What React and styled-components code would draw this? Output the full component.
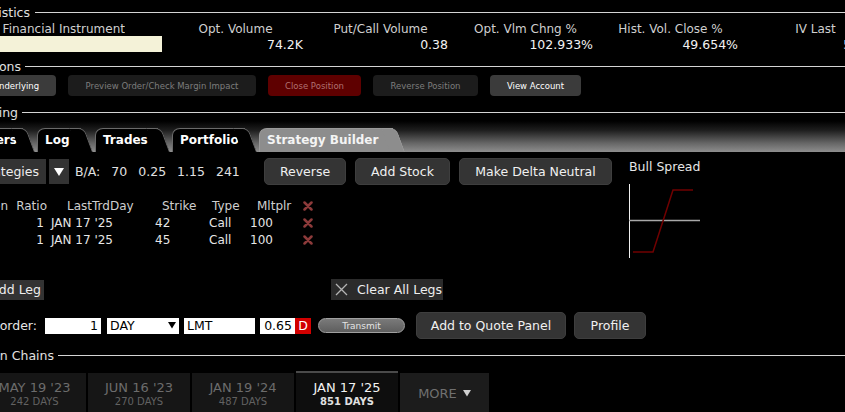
import styled, { createGlobalStyle } from "styled-components";

const GlobalStyle = createGlobalStyle`
    html, body {
        margin: 0;
        padding: 0;
        background: #000;
    }
    body {
        font-family: "DejaVu Sans", Verdana, sans-serif;
    }
`;

const Page = styled.div`
    width: 845px;
    height: 412px;
    overflow: hidden;
    background: #000;
    color: #dcdcdc;
    font-size: 12px;
    display: flex;
    flex-direction: column;
    padding-top: 3px;
    box-sizing: border-box;
`;

// keeps the right end of something at a fixed x, cutting its left side off like the window does
const Clip = styled.div`
    width: ${p => p.$w}px;
    flex: none;
    overflow: hidden;
    display: flex;
    justify-content: flex-end;
    align-items: ${p => p.$bottom ? "flex-end" : "center"};
    height: ${p => p.$h ? p.$h + "px" : "auto"};
    color: ${p => p.$color || "inherit"};
    white-space: nowrap;
`;

const SectionHead = styled.div`
    display: flex;
    align-items: center;
    height: 18px;
    margin-top: ${p => p.$top || 0}px;
    font-size: 12.5px;
    color: #e0e0e0;
    flex: none;
`;

const Rule = styled.div`
    flex: 1;
    height: 1px;
    background: #d4d4d4;
    margin-left: ${p => p.$gap}px;
`;

const StatsGrid = styled.div`
    display: grid;
    grid-template-columns: 163px repeat(5, 145px);
    grid-template-rows: 15px 16px;
    white-space: nowrap;
    flex: none;
`;

const StatLabel = styled.div`
    display: flex;
    justify-content: center;
    align-items: center;
    color: #cfcfcf;
    font-size: 12px;
`;

const StatValue = styled.div`
    display: flex;
    justify-content: flex-end;
    align-items: center;
    padding-right: 5px;
    color: #f2f2f2;
    font-size: 12.5px;
`;

const InstrumentBox = styled.div`
    width: 162px;
    height: 16px;
    background: #f4f2d8;
`;

const ActionRow = styled.div`
    display: flex;
    gap: 12px;
    height: 21px;
    flex: none;
`;

const actionColors = {
    on: { bg: "#3b3b3b", fg: "#ffffff" },
    off: { bg: "#1c1c1c", fg: "#7c7c7c" },
    red: { bg: "#5e0000", fg: "#b07070" },
};

const ActionButton = styled.div`
    width: ${p => p.$w}px;
    height: 21px;
    flex: none;
    display: flex;
    align-items: center;
    justify-content: center;
    border-radius: 4px;
    background: ${p => actionColors[p.$kind].bg};
    color: ${p => actionColors[p.$kind].fg};
    font-size: 8.5px;
    white-space: nowrap;
`;

const TabBar = styled.div`
    height: 31px;
    flex: none;
    display: flex;
    align-items: flex-end;
    background: linear-gradient(to bottom, #000 0%, #1e1e1e 30%, #646464 70%, #8e8e8e 100%);
`;

const Tab = styled.div`
    position: relative;
    width: ${p => p.$w}px;
    height: 24px;
    flex: none;
    box-sizing: border-box;
    margin-right: 14px;
    padding: 4px 0 0 7px;
    background: ${p => (p.$active ? "#8d8d8d" : "#000")};
    border: 1px solid ${p => (p.$active ? "#9a9a9a" : "#6a6a6a")};
    border-right: none;
    border-bottom: none;
    border-top-left-radius: 8px 7px;
    color: ${p => (p.$active ? "#f4f4f4" : "#ffffff")};
    font-weight: bold;
    font-size: 12px;
    white-space: nowrap;

    &::after {
        content: "";
        position: absolute;
        top: -1px;
        bottom: 0;
        right: -12px;
        width: 14px;
        background: inherit;
        border-top: 1px solid ${p => (p.$active ? "#9a9a9a" : "#6a6a6a")};
        border-right: 1px solid ${p => (p.$active ? "#9a9a9a" : "#6a6a6a")};
        border-top-right-radius: 6px;
        transform: skewX(20deg);
        transform-origin: bottom left;
    }
`;

const TopBlock = styled.div`
    display: grid;
    grid-template-columns: 629px 1fr;
    margin-top: 6px;
    flex: none;
`;

const BuilderRow = styled.div`
    display: grid;
    grid-template-columns: 264px auto;
    align-items: center;
    height: 27px;
`;

const StrategyGroup = styled.div`
    display: flex;
    align-items: center;
    font-size: 12.5px;
    color: #e0e0e0;
`;

const FlatButton = styled.div`
    height: ${p => p.$h || 25}px;
    width: ${p => p.$w ? p.$w + "px" : "auto"};
    margin-left: ${p => p.$ml || 0}px;
    display: flex;
    align-items: center;
    justify-content: ${p => p.$start ? "flex-start" : "center"};
    gap: ${p => p.$gap || 0}px;
    box-sizing: border-box;
    padding: ${p => p.$pad || "0 7px"};
    background: ${p => p.$bg || "#333"};
    color: #eee;
    font-size: 12.5px;
    white-space: nowrap;
    flex: none;

    svg {
        flex: none;
    }
`;

const Quotes = styled.div`
    display: flex;
    gap: 11px;
    margin-left: 6px;
    white-space: nowrap;
`;

const ButtonGroup = styled.div`
    display: flex;
    gap: ${p => p.$gap || 9}px;
    margin-left: ${p => p.$ml || 0}px;
`;

const RoundButton = styled.div`
    width: ${p => p.$w}px;
    height: 27px;
    flex: none;
    box-sizing: border-box;
    display: flex;
    align-items: center;
    justify-content: center;
    border-radius: 5px;
    background: #343434;
    border: 1px solid #3e3e3e;
    color: #f0f0f0;
    font-size: 12.5px;
    white-space: nowrap;
`;

const LegTable = styled.div`
    display: grid;
    grid-template-columns: 8px 39px 103px 55px 45px 48px 20px;
    grid-auto-rows: 17px;
    margin-top: 12px;
    font-size: 12px;
    color: #e2e2e2;
    white-space: nowrap;
`;

const Cell = styled.div`
    display: flex;
    align-items: center;
    justify-content: ${p => (p.$right ? "flex-end" : "flex-start")};
    padding-left: ${p => p.$pl || 0}px;
    padding-right: ${p => p.$pr || 0}px;
    color: ${p => (p.$head ? "#cfcfcf" : "#e6e6e6")};
    overflow: ${p => (p.$clip ? "hidden" : "visible")};
`;

const ChartPanel = styled.div`
    display: flex;
    flex-direction: column;
`;

const ChartTitle = styled.div`
    font-size: 12.5px;
    color: #e6e6e6;
    height: 17px;
    line-height: 17px;
    margin-bottom: 9px;
    white-space: nowrap;
`;

const LegsRow = styled.div`
    display: grid;
    grid-template-columns: 331px auto;
    align-items: center;
    margin-top: 20px;
    height: 21px;
    flex: none;
`;

const OrderRow = styled.div`
    display: flex;
    align-items: center;
    height: 27px;
    margin-top: 12px;
    flex: none;
    font-size: 12.5px;
    color: #e6e6e6;
`;

const Field = styled.div`
    width: ${p => p.$w}px;
    height: 16px;
    flex: none;
    box-sizing: border-box;
    margin-left: ${p => p.$ml || 0}px;
    background: #fff;
    color: #000;
    font-size: 12.5px;
    display: flex;
    align-items: center;
    justify-content: ${p => (p.$right ? "flex-end" : "space-between")};
    padding: 0 3px;
    white-space: nowrap;
`;

const DelayFlag = styled.div`
    width: 16px;
    height: 16px;
    flex: none;
    background: #d20000;
    color: #fff;
    font-size: 12.5px;
    display: flex;
    align-items: center;
    justify-content: center;
`;

const Transmit = styled.div`
    width: 87px;
    height: 15px;
    flex: none;
    box-sizing: border-box;
    margin-left: 7px;
    border-radius: 8px;
    border: 1px solid #a0a0a0;
    background: linear-gradient(to bottom, #7a7a7a, #5e5e5e);
    color: #e4e4e4;
    font-size: 9px;
    display: flex;
    align-items: center;
    justify-content: center;
`;

const ExpiryRow = styled.div`
    display: flex;
    gap: 2px;
    margin-top: 7px;
    height: 41px;
    flex: none;
`;

const ExpiryTab = styled.div`
    width: ${p => p.$w || 102}px;
    height: 41px;
    flex: none;
    box-sizing: border-box;
    border-top: 2px solid ${p => (p.$active ? "#4a4a4a" : "#000")};
    background: ${p => p.$bg || (p.$active ? "#0e0e0e" : "#161616")};
    display: flex;
    flex-direction: column;
    align-items: center;
    justify-content: center;
    padding-top: 2px;
    white-space: nowrap;
`;

const ExpiryDate = styled.div`
    font-size: 13px;
    line-height: 15px;
    color: ${p => (p.$active ? "#f2f2f2" : "#6c6c6c")};
`;

const ExpiryDays = styled.div`
    font-size: 10px;
    line-height: 13px;
    font-weight: ${p => (p.$active ? "bold" : "normal")};
    color: ${p => (p.$active ? "#e0e0e0" : "#626262")};
`;

const MoreLabel = styled.div`
    display: flex;
    align-items: center;
    gap: 6px;
    font-size: 13px;
    color: #707070;
`;

const RedX = () => (
    <svg width="10" height="10" viewBox="0 0 10 10">
        <path d="M1.5 1.5 L8.5 8.5 M8.5 1.5 L1.5 8.5" stroke="#8c3a3a" strokeWidth="2.5" strokeLinecap="round" />
    </svg>
);

const ThinX = () => (
    <svg width="13" height="13" viewBox="0 0 13 13">
        <path d="M1 1 L12 12 M12 1 L1 12" stroke="#b4b4b4" strokeWidth="1.3" />
    </svg>
);

const Triangle = ({ size = 9, color = "#fff" }) => (
    <svg width={size} height={size * 0.8} viewBox="0 0 10 8">
        <polygon points="0,0 10,0 5,8" fill={color} />
    </svg>
);

const PayoffChart = () => (
    <svg width="75" height="75" viewBox="0 0 75 75">
        <line x1="0.5" y1="0" x2="0.5" y2="74" stroke="#f0f0f0" strokeWidth="1" />
        <line x1="0" y1="36.5" x2="71" y2="36.5" stroke="#a8a8a8" strokeWidth="1.3" />
        <polyline points="4,68 24,68 44,6 64,6" fill="none" stroke="#700000" strokeWidth="1.5" />
    </svg>
);

const stats = [
    ["Opt. Volume", "74.2K"],
    ["Put/Call Volume", "0.38"],
    ["Opt. Vlm Chng %", "102.933%"],
    ["Hist. Vol. Close %", "49.654%"],
    ["IV Last", "55.3%"],
];

const legs = [
    { ratio: "1", day: "JAN 17 '25", strike: "42", type: "Call", mult: "100" },
    { ratio: "1", day: "JAN 17 '25", strike: "45", type: "Call", mult: "100" },
];

const expiries = [
    { date: "JUN 16 '23", days: "270 DAYS" },
    { date: "JAN 19 '24", days: "487 DAYS" },
    { date: "JAN 17 '25", days: "851 DAYS", active: true },
];

const App = () => {
    return (
        <>
            <GlobalStyle />
            <Page>
                <SectionHead>
                    <Clip $w={30}>Statistics</Clip>
                    <Rule $gap={5} />
                </SectionHead>

                <StatsGrid>
                    <Clip $w={125} $color="#cfcfcf">Financial Instrument</Clip>
                    {stats.map(([label]) => (
                        <StatLabel key={label}>{label}</StatLabel>
                    ))}
                    <div><InstrumentBox /></div>
                    {stats.map(([label, value]) => (
                        <StatValue key={label}>{value}</StatValue>
                    ))}
                </StatsGrid>

                <SectionHead $top={5}>
                    <Clip $w={21}>Actions</Clip>
                    <Rule $gap={4} />
                </SectionHead>

                <ActionRow>
                    <Clip $w={56}>
                        <ActionButton $kind="on" $w={80}>Underlying</ActionButton>
                    </Clip>
                    <ActionButton $kind="off" $w={188}>Preview Order/Check Margin Impact</ActionButton>
                    <ActionButton $kind="red" $w={93}>Close Position</ActionButton>
                    <ActionButton $kind="off" $w={105}>Reverse Position</ActionButton>
                    <ActionButton $kind="on" $w={91}>View Account</ActionButton>
                </ActionRow>

                <SectionHead $top={7}>
                    <Clip $w={18}>Trading</Clip>
                    <Rule $gap={4} />
                </SectionHead>

                <TabBar>
                    <Clip $w={37} $h={24} $bottom>
                        <Tab $w={60}>Orders</Tab>
                    </Clip>
                    <Tab $w={44}>Log</Tab>
                    <Tab $w={63}>Trades</Tab>
                    <Tab $w={73}>Portfolio</Tab>
                    <Tab $w={134} $active>Strategy Builder</Tab>
                </TabBar>

                <TopBlock>
                    <div>
                        <BuilderRow>
                            <StrategyGroup>
                                <Clip $w={46}>
                                    <FlatButton>Strategies</FlatButton>
                                </Clip>
                                <FlatButton $pad="0" $w={20} $ml={3}>
                                    <Triangle size={10} />
                                </FlatButton>
                                <Quotes>
                                    <span>B/A:</span>
                                    <span>70</span>
                                    <span>0.25</span>
                                    <span>1.15</span>
                                    <span>241</span>
                                </Quotes>
                            </StrategyGroup>
                            <ButtonGroup>
                                <RoundButton $w={82}>Reverse</RoundButton>
                                <RoundButton $w={95}>Add Stock</RoundButton>
                                <RoundButton $w={153}>Make Delta Neutral</RoundButton>
                            </ButtonGroup>
                        </BuilderRow>

                        <LegTable>
                            <Cell $head $right $clip>Action</Cell>
                            <Cell $head $right>Ratio</Cell>
                            <Cell $head $pl={20}>LastTrdDay</Cell>
                            <Cell $head $pl={12}>Strike</Cell>
                            <Cell $head $pl={7}>Type</Cell>
                            <Cell $head $pl={7}>Mltplr</Cell>
                            <Cell $pl={5}><RedX /></Cell>
                            {legs.map((leg, i) => [
                                <Cell key={"a" + i} />,
                                <Cell key={"r" + i} $right $pr={3}>{leg.ratio}</Cell>,
                                <Cell key={"d" + i} $pl={4}>{leg.day}</Cell>,
                                <Cell key={"s" + i} $pl={5}>{leg.strike}</Cell>,
                                <Cell key={"t" + i} $pl={4}>{leg.type}</Cell>,
                                <Cell key={"m" + i}>{leg.mult}</Cell>,
                                <Cell key={"x" + i} $pl={5}><RedX /></Cell>,
                            ])}
                        </LegTable>
                    </div>

                    <ChartPanel>
                        <ChartTitle>Bull Spread</ChartTitle>
                        <PayoffChart />
                    </ChartPanel>
                </TopBlock>

                <LegsRow>
                    <Clip $w={44}>
                        <FlatButton $h={20} $pad="0 3px 0 7px">Add Leg</FlatButton>
                    </Clip>
                    <FlatButton $h={21} $w={112} $bg="#2b2b2b" $pad="0 2px 0 4px" $gap={9} $start>
                        <ThinX />
                        Clear All Legs
                    </FlatButton>
                </LegsRow>

                <OrderRow>
                    <Clip $w={37}>Create order:</Clip>
                    <Field $w={56} $ml={8} $right>1</Field>
                    <Field $w={72} $ml={6}>
                        DAY
                        <Triangle size={8} color="#000" />
                    </Field>
                    <Field $w={71} $ml={5}>LMT</Field>
                    <Field $w={35} $ml={5} $right>0.65</Field>
                    <DelayFlag>D</DelayFlag>
                    <Transmit>Transmit</Transmit>
                    <ButtonGroup $gap={8} $ml={11}>
                        <RoundButton $w={150}>Add to Quote Panel</RoundButton>
                        <RoundButton $w={72}>Profile</RoundButton>
                    </ButtonGroup>
                </OrderRow>

                <SectionHead $top={7}>
                    <Clip $w={54}>Option Chains</Clip>
                    <Rule $gap={4} />
                </SectionHead>

                <ExpiryRow>
                    <Clip $w={86}>
                        <ExpiryTab $w={103}>
                            <ExpiryDate>MAY 19 '23</ExpiryDate>
                            <ExpiryDays>242 DAYS</ExpiryDays>
                        </ExpiryTab>
                    </Clip>
                    {expiries.map(e => (
                        <ExpiryTab key={e.date} $w={102} $active={e.active}>
                            <ExpiryDate $active={e.active}>{e.date}</ExpiryDate>
                            <ExpiryDays $active={e.active}>{e.days}</ExpiryDays>
                        </ExpiryTab>
                    ))}
                    <ExpiryTab $w={89} $bg="#1c1c1c">
                        <MoreLabel>
                            MORE
                            <Triangle size={8} color="#d0d0d0" />
                        </MoreLabel>
                    </ExpiryTab>
                </ExpiryRow>
            </Page>
        </>
    );
};

export default App;
